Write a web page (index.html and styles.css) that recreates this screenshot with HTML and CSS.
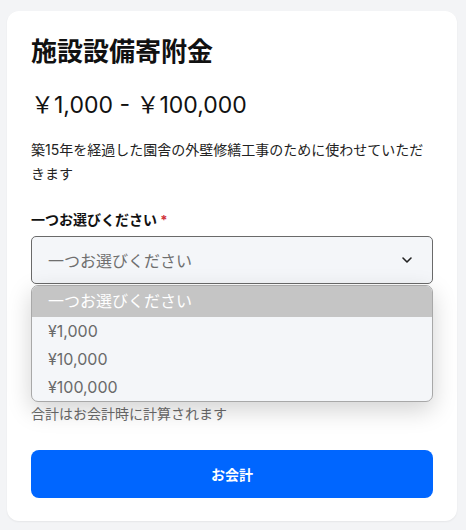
FILE: index.html
```html
<!DOCTYPE html>
<html lang="ja">
<head>
<meta charset="utf-8">
<title>施設設備寄附金</title>
<link rel="stylesheet" href="styles.css">
</head>
<body>
<div class="page">
  <div class="card">
    <h1 class="title">施設設備寄附金</h1>
    <p class="price">￥1,000 - ￥100,000</p>
    <p class="desc">築15年を経過した園舎の外壁修繕工事のために使わせていただきます</p>
    <div class="field">
      <label class="label">一つお選びください <span class="req">*</span></label>
      <div class="select-wrap">
        <div class="select">
          <span class="select-text">一つお選びください</span>
          <svg class="chevron" width="12" height="8" viewBox="0 0 12 8"><path d="M2 2l4 4 4-4" fill="none" stroke="#222" stroke-width="1.6" stroke-linecap="round" stroke-linejoin="round"/></svg>
        </div>
        <ul class="menu">
          <li class="opt opt-active">一つお選びください</li>
          <li class="opt">¥1,000</li>
          <li class="opt">¥10,000</li>
          <li class="opt">¥100,000</li>
        </ul>
      </div>
    </div>
    <p class="note">合計はお会計時に計算されます</p>
    <button class="btn">お会計</button>
  </div>
</div>
</body>
</html>
```
FILE: styles.css
```css
* { box-sizing: border-box; }
html, body { margin: 0; padding: 0; }
body {
  background: #f3f4f6;
  font-family: Inter, "Noto Sans CJK JP", sans-serif;
  color: #111;
}
.page {
  padding: 11px 9px 10px 7px;
}
.card {
  background: #fff;
  border-radius: 12px;
  padding: 24px 24px 23px 24px;
  box-shadow: 0 1px 2px rgba(0,0,0,0.06);
  display: flex;
  flex-direction: column;
}
.title {
  margin: 0;
  font-size: 26px;
  line-height: 34px;
  font-weight: 700;
  color: #111;
}
.price {
  margin: 20px 0 0;
  font-size: 23px;
  line-height: 33px;
  font-weight: 400;
  color: #111;
}
.desc {
  margin: 16px 0 0;
  font-size: 14px;
  line-height: 24px;
  color: #222;
}
.field {
  margin-top: 24px;
  display: flex;
  flex-direction: column;
  gap: 6px;
}
.label {
  font-size: 14px;
  line-height: 20px;
  font-weight: 700;
  color: #111;
}
.req {
  color: #d0313a;
  font-size: 13px;
}
.select-wrap {
  position: relative;
}
.select {
  height: 48px;
  border: 1px solid #6a6a6a;
  border-radius: 5px;
  background: #f4f6f9;
  display: flex;
  align-items: center;
  justify-content: space-between;
  padding: 0 19px 0 16px;
}
.select-text {
  font-size: 16px;
  color: #6f6f6f;
}
.chevron { display: block; }
.menu {
  position: absolute;
  left: 0;
  right: 0;
  top: calc(100% + 1px);
  margin: 0;
  padding: 0;
  list-style: none;
  background: #f4f6f9;
  border: 1px solid #a8a8a8;
  border-radius: 7px;
  overflow: hidden;
  box-shadow: 0 8px 24px rgba(0,0,0,0.18);
  z-index: 2;
}
.opt {
  height: 28px;
  line-height: 28px;
  padding-left: 16px;
  font-size: 16px;
  color: #6a6a6a;
}
.opt-active {
  height: 31px;
  line-height: 31px;
  background: #c5c5c5;
  color: #fff;
}
.note {
  margin: 120px 0 0;
  font-size: 14px;
  line-height: 20px;
  color: #6b6b6b;
}
.btn {
  margin-top: 26px;
  height: 48px;
  width: 100%;
  border: none;
  border-radius: 8px;
  background: #0066ff;
  color: #fff;
  font-family: Inter, "Noto Sans CJK JP", sans-serif;
  font-size: 14px;
  font-weight: 700;
}
```
